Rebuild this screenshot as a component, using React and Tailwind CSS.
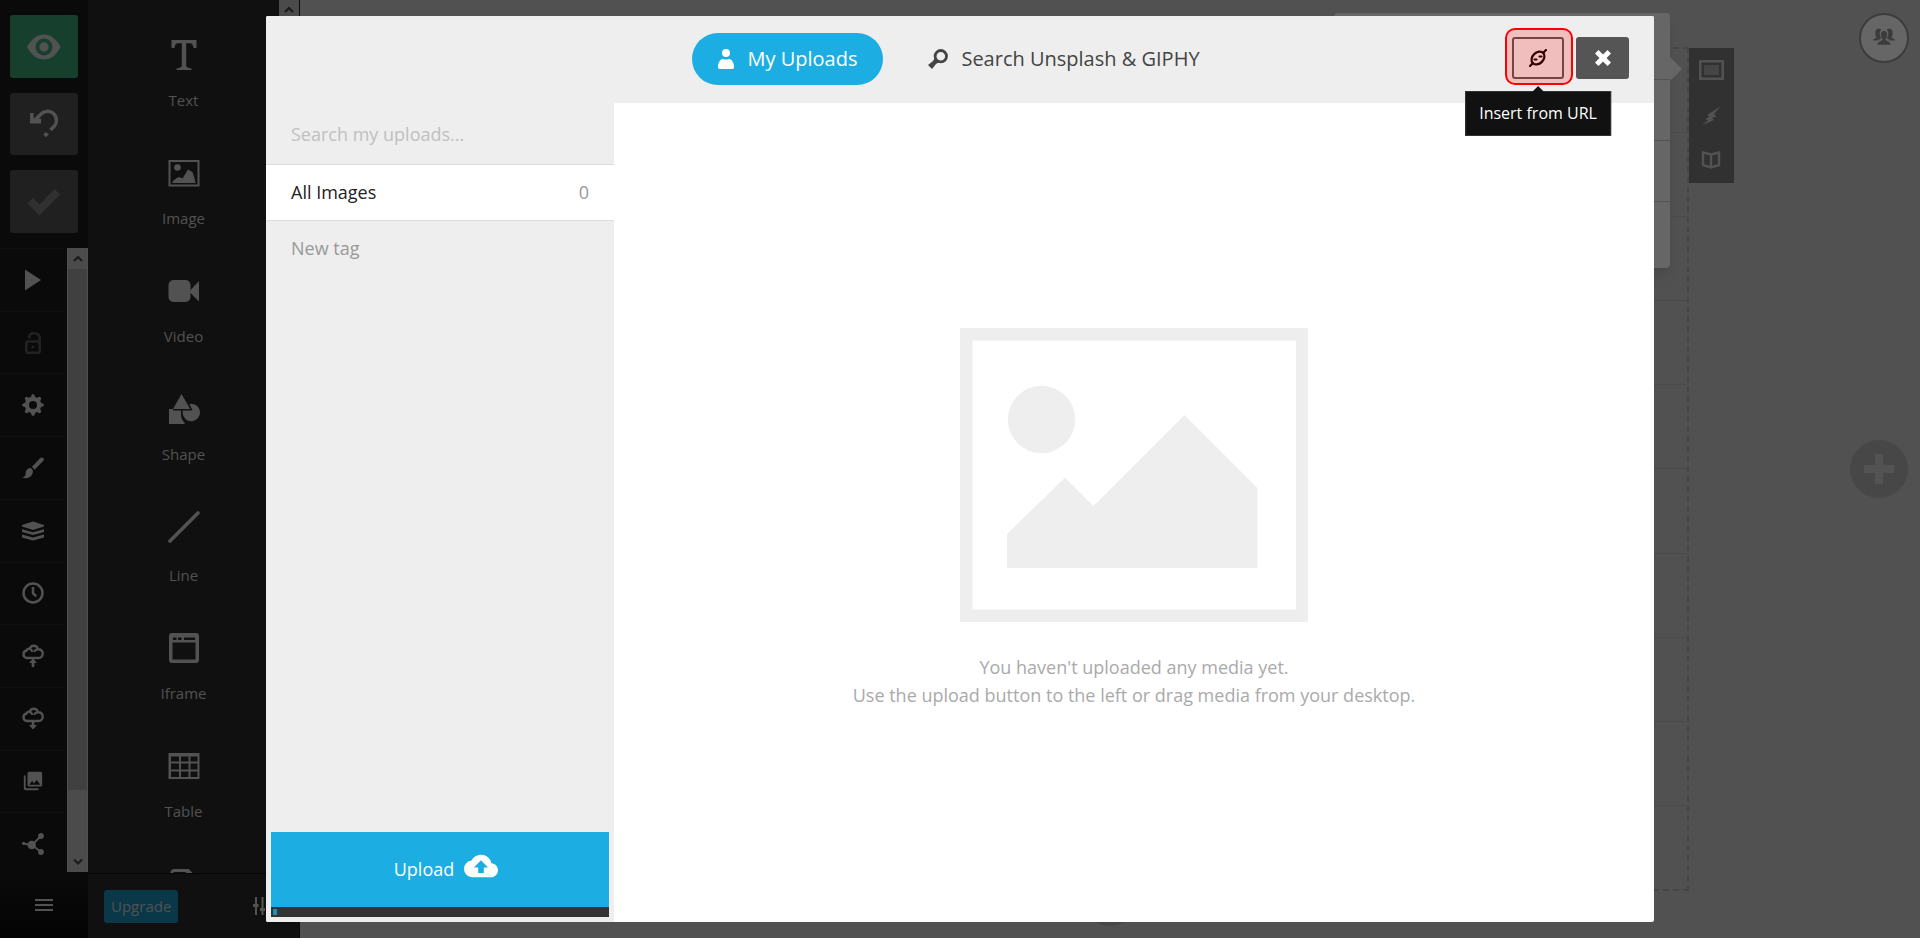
import React from "react";
import { MdBackup, MdCollections } from "react-icons/md";

function Svg({ className, box = "0 0 32 32", children }) {
  return (
    <svg viewBox={box} className={className} fill="currentColor" aria-hidden="true">
      {children}
    </svg>
  );
}

const EyeIcon = () => (
  <Svg box="0 0 34 26" className="w-[34px] h-[26px]">
    <path
      fillRule="evenodd"
      d="M0 13C4 6 9.500 0.500 17 0.500S30 6 33.500 13C30 20 24.500 25.500 17 25.500S4 20 0 13zM17 4.500a8.500 8.500 0 1 0 0 17a8.500 8.500 0 0 0 0-17zM17 8.300a4.700 4.700 0 1 1 0 9.400a4.700 4.700 0 0 1 0-9.400z"
    />
  </Svg>
);

const UndoIcon = () => (
  <Svg box="0 0 30 30" className="w-[30px] h-[30px]">
    <path
      d="M5 12L11 6C15 1.500 21 1.200 24.500 4.500C28.500 8.500 28 14 25.500 17L21.500 21"
      fill="none"
      stroke="currentColor"
      strokeWidth="3.400"
    />
    <path d="M1 4h3.600v5.500l4.500 0.200h3v4.800H1z" />
    <path d="M17 23l2.800 2.600l-2.800 2.600l-2.800-2.600z" />
  </Svg>
);

const CheckIcon = () => (
  <Svg box="0 0 34 28" className="w-[34px] h-[28px]">
    <path d="M0.500 15.500L6 10l6.500 6.500L27.500 1l5.500 5.500L12.500 27.500z" />
  </Svg>
);

const PlayIcon = () => (
  <Svg box="0 0 22 22" className="size-[22px]">
    <path d="M3 0.500L19 11L3 21.500z" />
  </Svg>
);

const LockIcon = () => (
  <Svg box="0 0 22 22" className="size-[22px] text-[#222222]">
    <path d="M7.300 6.500V5.500C7.500 3 9.300 1.300 12 1.300C15.500 1.300 17.700 3.200 17.700 6.500V11" fill="none" stroke="currentColor" strokeWidth="2.600" />
    <rect x="4.300" y="9.500" width="13.400" height="11.200" rx="2" fill="none" stroke="currentColor" strokeWidth="2.600" />
    <circle cx="11" cy="15" r="1.600" />
  </Svg>
);

const GearIcon = () => (
  <Svg box="0 0 22 22" className="size-[22px]">
    {[0, 45, 90, 135].map((a) => (
      <path key={a} d="M9 2.500L10 0.300h2L13 2.500v17L12 21.700h-2L9 19.500z" transform={`rotate(${a} 11 11)`} />
    ))}
    <circle cx="11" cy="11" r="8.300" />
    <circle cx="11" cy="11" r="4" className="fill-[#0a0a0a]" />
  </Svg>
);

const BrushIcon = () => (
  <Svg box="0 0 22 22" className="size-[22px]">
    <path d="M12.500 12.800L10 9.800L18 1.200C19 0.200 20.400 0.200 21.200 1C22 1.900 22 3 21.200 4z" />
    <path d="M0.500 20.500C2.800 20 3.500 18.500 3.700 16C4 13.200 5.600 11.200 7.800 11C9.800 11 11 12.500 10.900 14.500C10.800 19 6.500 22.300 0.500 20.800z" />
  </Svg>
);

const LayersIcon = () => (
  <Svg box="0 0 22 22" className="size-[22px]">
    <path d="M0 5L11 1.500L22 5v1.500L11 10L0 6.500z" />
    <path d="M0 9.300l11 3l11-3v2.600l-11 3l-11-3zM0 14.600l11 3l11-3v2.800l-11 3l-11-3z" />
  </Svg>
);

const ClockIcon = () => (
  <Svg box="0 0 22 22" className="size-[22px]">
    <circle cx="11" cy="11" r="9.500" fill="none" stroke="currentColor" strokeWidth="2.500" />
    <path d="M11 5v6.500l3.300 2.800" fill="none" stroke="currentColor" strokeWidth="2.500" />
  </Svg>
);

function CloudSync({ down }) {
  return (
    <Svg box="0 0 22 24" className="w-[22px] h-6">
      <path
        d="M8 14H5a3.800 3.800 0 0 1-.5-7.500C5 5 6.500 4.500 7.700 4.800C8.500 2.500 10 1.800 11.600 1.800C14 1.800 15.600 3.500 15.800 5.300C18.600 4.900 20.700 6.800 20.700 9.400C20.700 12 19 14 16.500 14H8"
        fill="none"
        stroke="currentColor"
        strokeWidth="2.400"
      />
      <path d="M7.700 5c1.600.3 2.400 1.500 2.400 3M15.600 5.500c-2 .2-3.200 1-3.500 2.500" fill="none" stroke="currentColor" strokeWidth="2" />
      {down ? <path d="M9.700 13h2.600v5H15l-4 4.500l-4-4.500h2.700z" /> : <path d="M9.700 23h2.600v-4H15l-4-4.500L7 19h2.700z" />}
    </Svg>
  );
}

const ShareIcon = () => (
  <Svg box="0 0 22 22" className="size-[22px]">
    <path d="M1 10.500l9 1.500L19 3M10 12l9 7" fill="none" stroke="currentColor" strokeWidth="1.800" />
    <circle cx="9.700" cy="12" r="4.200" />
    <circle cx="19" cy="3" r="2.900" />
    <circle cx="19" cy="19" r="2.900" />
    <circle cx="1.600" cy="10.300" r="1.600" />
  </Svg>
);

const TextIcon = () => (
  <Svg className="size-8">
    <path d="M3.500 1h25v8h-3c-.5-3.500-1.500-4.700-4-4.700h-3.300V26c0 2 .8 2.500 5.300 3.500V31h-15v-1.500C13 28.500 13.800 28 13.800 26V4.300h-3.300C8 4.300 7 5.500 6.500 9h-3z" />
  </Svg>
);

const ImageIcon = () => (
  <Svg className="size-8">
    <rect x="1.500" y="4" width="29" height="24.500" fill="none" stroke="currentColor" strokeWidth="2" />
    <circle cx="9.500" cy="10.500" r="3.300" />
    <path d="M4.500 26v-1.500L8.500 21l3-1l3 1.500L20 12.500l4.500 2.500L26.500 21l1 5z" />
  </Svg>
);

const VideoIcon = () => (
  <Svg className="size-8">
    <rect x="0.500" y="5" width="22" height="22" rx="5" />
    <path d="M22 15.500L31 6v20.500L22 17.500z" />
  </Svg>
);

const ShapeIcon = () => (
  <Svg className="size-8">
    <path d="M1 16h4v1.500h8V21c0 4 1.300 6.500 3.500 8.500V31H1z" />
    <path d="M13.500 1l8.700 15H5z" />
    <path d="M20 17.500h4.500L21.500 11A8.700 8.700 0 1 1 14.600 20v-2.500z" />
  </Svg>
);

const LineIcon = () => (
  <Svg className="size-8">
    <path d="M2 30L30 2" stroke="currentColor" strokeWidth="3.600" strokeLinecap="round" />
  </Svg>
);

const IframeIcon = () => (
  <Svg className="size-8">
    <path
      fillRule="evenodd"
      d="M4 1h24a3 3 0 0 1 3 3v24a3 3 0 0 1-3 3H4a3 3 0 0 1-3-3V4a3 3 0 0 1 3-3zM4.500 10.500v17h23v-17zM5 5.500v2.500h3.500V5.500zM10 5.500v2.500h3.500V5.500zM16 5.500v2.500h11V5.500z"
    />
  </Svg>
);

const TableIcon = () => (
  <Svg className="size-8">
    <path
      fillRule="evenodd"
      d="M0.500 3h31v26h-31zM3 6.500v5h8v-5zM13 6.500v5h7.500v-5zM22.500 6.500v5h7v-5zM3 13.500v6h8v-6zM13 13.500v6h7.500v-6zM22.500 13.500v6h7v-6zM3 21.500v5.500h8v-5.500zM13 21.500v5.500h7.500v-5.500zM22.500 21.500v5.500h7v-5.500z"
    />
  </Svg>
);

const FileIcon = () => (
  <Svg className="size-8">
    <path d="M4 31V4.500a2 2 0 0 1 2-2h14l6 6V31z" fill="none" stroke="currentColor" strokeWidth="3" />
    <path d="M19 3v7h7" fill="none" stroke="currentColor" strokeWidth="2.500" />
  </Svg>
);

const Chevron = ({ down }) => (
  <Svg box="0 0 10 8" className="w-[10px] h-2">
    <path
      d={down ? "M1 1.500L5 5.500L9 1.500" : "M1 6L5 2L9 6"}
      fill="none"
      className="stroke-[#1c1c1c]"
      strokeWidth="2.200"
    />
  </Svg>
);

const tools = [
  { name: "Play", icon: <PlayIcon /> },
  { name: "Unlock", icon: <LockIcon /> },
  { name: "Settings", icon: <GearIcon /> },
  { name: "Theme", icon: <BrushIcon /> },
  { name: "Layers", icon: <LayersIcon /> },
  { name: "History", icon: <ClockIcon /> },
  { name: "Export", icon: <CloudSync /> },
  { name: "Import", icon: <CloudSync down /> },
  { name: "Media", icon: <MdCollections className="size-[22px]" /> },
  { name: "Share", icon: <ShareIcon /> },
];

const elements = [
  { name: "Text", icon: <TextIcon /> },
  { name: "Image", icon: <ImageIcon /> },
  { name: "Video", icon: <VideoIcon /> },
  { name: "Shape", icon: <ShapeIcon /> },
  { name: "Line", icon: <LineIcon />, tall: true },
  { name: "Iframe", icon: <IframeIcon /> },
  { name: "Table", icon: <TableIcon /> },
];

function ToolRail() {
  return (
    <aside className="flex w-[88px] shrink-0 flex-col bg-[#0a0a0a] text-[#525252]">
      <div className="flex flex-col gap-[15px] px-[10px] py-[15px]">
        <button aria-label="Preview" className="flex h-[63px] items-center justify-center rounded-[3px] bg-[#16402d]">
          <EyeIcon />
        </button>
        <button aria-label="Undo" className="flex h-[62px] items-center justify-center rounded-[3px] bg-[#202020]">
          <UndoIcon />
        </button>
        <button aria-label="Save" className="flex h-[63px] items-center justify-center rounded-[3px] bg-[#202020] text-[#303030]">
          <CheckIcon />
        </button>
      </div>
      <div className="flex min-h-0 flex-1">
        <div className="flex-1 overflow-hidden">
          <div className="flex h-[627px] flex-col">
            {tools.map((t) => (
              <button
                key={t.name}
                aria-label={t.name}
                className="flex flex-1 items-center justify-center border-t border-[#0f0f0f] pr-0.5"
              >
                {t.icon}
              </button>
            ))}
          </div>
        </div>
        <div className="flex w-[21px] flex-col items-center border-x border-[#505050] bg-[#4b4b4b]">
          <div className="flex h-[21px] items-center">
            <Chevron />
          </div>
          <div className="w-full flex-1 bg-[#404040]" />
          <div className="flex h-[82px] items-end pb-[6px]">
            <Chevron down />
          </div>
        </div>
      </div>
      <button aria-label="Menu" className="flex h-[66px] items-center justify-center bg-gradient-to-b from-[#0a0a0a] to-[#040404]">
        <Svg box="0 0 18 12" className="h-3 w-[18px]">
          <path d="M0 0h18v2H0zM0 5h18v2H0zM0 10h18v2H0z" />
        </Svg>
      </button>
    </aside>
  );
}

function ElementPanel() {
  return (
    <aside className="flex w-[212px] shrink-0 flex-col border-r border-[#0a0a0a] bg-[#101010] text-[#525252]">
      <div className="flex min-h-0 flex-1">
        <div className="w-[192px] overflow-hidden pt-[39px]">
          {elements.map((e) => (
            <button key={e.name} className="flex w-full flex-col items-center pb-[47px] text-[15px] leading-5">
              {e.icon}
              <span className={e.tall ? "mt-[22px]" : "mt-[19px]"}>{e.name}</span>
            </button>
          ))}
          <button aria-label="File" className="flex w-full flex-col items-center">
            <FileIcon />
          </button>
        </div>
        <div className="flex-1 bg-[#4b4b4b] px-[5px] pt-[6px]">
          <Chevron />
        </div>
      </div>
      <div className="flex h-[65px] items-center justify-between border-t border-[#060606] pl-4 pr-[28px]">
        <button className="h-[33px] rounded-[3px] bg-[#0a3849] px-[7px] text-[15px] leading-[33px]">Upgrade</button>
        <button aria-label="Options">
          <Svg box="0 0 18 18" className="size-[18px]">
            <path d="M2 0h2v7h1.500v3H4v8H2v-8H0V7h2zM8.500 0h2v11h1.500v3h-1.500v4h-2v-4H7v-3h1.500zM15 0h2v4h1v3h-1v11h-2V7h-1.500V4H15z" />
          </Svg>
        </button>
      </div>
    </aside>
  );
}

function Canvas() {
  return (
    <main className="relative flex-1 overflow-hidden bg-[#515151]">
      <div className="absolute right-[231px] top-[47px] flex h-[844px] w-[1157px] flex-col border-2 border-dashed border-[#464646]">
        {Array.from({ length: 10 }, (_, i) => (
          <div key={i} className={i ? "flex-1 border-t border-[#4a4a4a]" : "flex-1"} />
        ))}
      </div>
      <div className="absolute right-[250px] top-[13px] flex h-[255px] w-[336px] flex-col rounded bg-[#666666] shadow-lg">
        <div className="h-[66px]" />
        <div className="h-[61px] border-t border-[#535353]" />
        <div className="h-[61px] border-t border-[#535353]" />
        <div className="flex-1 border-t border-[#535353]" />
        <svg viewBox="0 0 12 24" className="absolute left-full top-11 h-6 w-3 fill-[#666666]" aria-hidden="true">
          <path d="M0 0l12 12L0 24z" />
        </svg>
      </div>
      <div className="absolute right-[186px] top-12 flex h-[135px] w-[45px] flex-col items-center justify-between bg-[#313131] pb-3 pr-px pt-3 text-[#525252]">
        <button aria-label="Slide">
          <Svg box="0 0 25 20" className="h-5 w-[25px]">
            <path fillRule="evenodd" d="M0 0h25v20H0zM2.500 2.500v15h20v-15z" />
            <rect x="5" y="5" width="15" height="10" className="fill-[#454545]" />
          </Svg>
        </button>
        <button aria-label="Interactivity">
          <Svg box="0 0 20 20" className="size-5">
            <path d="M19.500 0.500L6 9l2.500 1.500L4.500 13l2.500 1.500L0.500 19.500L13 14l-2-2l4.500-1.500L13 8z" />
          </Svg>
        </button>
        <button aria-label="Notes" className="pb-0.5">
          <Svg box="0 0 20 18" className="h-[18px] w-5">
            <path d="M10 4v13M10 3.500L2 1.500v12.500l8 2.500l8-2.500V1.500z" fill="none" stroke="currentColor" strokeWidth="2.400" />
          </Svg>
        </button>
      </div>
      <button
        aria-label="Collaborators"
        className="absolute right-[11px] top-[13px] flex size-[50px] items-center justify-center rounded-full border-2 border-[#3c3c3c] bg-[#666666] pb-0.5 text-[#3c3c3c]"
      >
        <Svg box="0 0 22 18" className="h-[18px] w-[22px]">
          <path d="M5.500 0.500C7.500.5 8 1.500 8 2C6.300 3.500 6.400 7 7.500 9L8 10.500C7 11 5.800 11.500 5.300 12.500H0C.2 10.500 2.500 10.500 3.500 9.500C1.800 7.500 1.500 0.500 5.500.5zM16.500 0.500C14.500.5 14 1.500 14 2C15.700 3.500 15.600 7 14.500 9L14 10.500C15 11 16.200 11.500 16.700 12.500H22C21.800 10.500 19.500 10.500 18.500 9.500C20.200 7.500 20.500 0.500 16.500.5z" />
          <path d="M11 3C14 3 14.500 5.500 14 8C13.700 9.700 13 10.500 12.600 11.200C12.800 13.200 17.500 13 17.500 16.800H4.500C4.500 13 9.200 13.200 9.400 11.200C9 10.500 8.300 9.700 8 8C7.500 5.500 8 3 11 3z" />
        </Svg>
      </button>
      <button
        aria-label="Add slide to the right"
        className="absolute right-3 top-1/2 flex size-[58px] -translate-y-1/2 items-center justify-center rounded-full bg-[#474747] text-[#535353]"
      >
        <Svg box="0 0 30 30" className="size-[30px]">
          <path d="M11 0h8v11h11v8H19v11h-8V19H0v-8h11z" />
        </Svg>
      </button>
      <button
        aria-label="Add slide below"
        className="absolute bottom-3 left-[781px] size-[58px] rounded-full bg-[#474747]"
      />
    </main>
  );
}

function ModalHeader() {
  return (
    <header className="flex h-[87px] shrink-0 items-start rounded-t-[2px] bg-[#eeeeee] px-[25px] pt-[17px]">
      <div className="flex-1" />
      <nav className="flex items-center gap-[17px] text-[20px]">
        <button className="flex h-[52px] items-center gap-[13px] rounded-full bg-[#1caee3] px-[26px] text-white">
          <Svg box="0 0 16 20" className="h-5 w-4">
            <circle cx="8" cy="4" r="4" />
            <path d="M0 18c0-4.500 2.500-8 5-8c1.500.7 4.500.7 6 0c2.500 0 5 3.500 5 8c0 1.200-.5 2-1.500 2h-13C.5 20 0 19.200 0 18z" />
          </Svg>
          My Uploads
        </button>
        <button className="flex h-[52px] items-center gap-[13px] px-[28px] text-[#444444]">
          <Svg box="0 0 20 20" className="size-5">
            <circle cx="12.800" cy="7.200" r="5.700" fill="none" stroke="currentColor" strokeWidth="2.800" />
            <path d="M6.500 9.500l4 4l-2.500 1.500l-4 5l-4-4l5-4z" />
          </Svg>
          Search Unsplash &amp; GIPHY
        </button>
      </nav>
      <div className="flex flex-1 items-center justify-end gap-3 pt-1">
        <div className="relative">
          <button
            aria-label="Insert from URL"
            aria-describedby="url-tip"
            className="flex h-[42px] w-[52px] items-center justify-center rounded-[3px] border-2 border-[#555555] text-black"
          >
            <Svg box="0 0 18 18" className="size-[18px]">
              <g fill="none" stroke="currentColor" strokeWidth="2.200" strokeLinecap="round">
                <ellipse cx="9" cy="9" rx="7.300" ry="5.500" transform="rotate(-45 9 9)" />
                <path d="M1 17l3-3M14 4l3-3M5.500 10.500l2 0M10.500 7.500l2 0" />
              </g>
            </Svg>
          </button>
          <div className="pointer-events-none absolute -bottom-[6px] -left-[7px] -right-[9px] -top-[9px] rounded-[10px] border-2 border-[#ff0000] bg-[#ff0000]/20" />
          <div
            id="url-tip"
            role="tooltip"
            className="absolute left-1/2 top-[54px] -translate-x-1/2 whitespace-nowrap border border-[#333333] bg-[#111111] px-[13px] text-[16px] leading-[43px] text-white"
          >
            <svg viewBox="0 0 12 6" className="absolute bottom-full left-1/2 h-[6px] w-3 -translate-x-1/2 fill-[#111111]" aria-hidden="true">
              <path d="M6 0l6 6H0z" />
            </svg>
            Insert from URL
          </div>
        </div>
        <button aria-label="Close" className="flex h-[42px] w-[53px] items-center justify-center rounded-[3px] bg-[#555555] text-white">
          <Svg box="0 0 16 16" className="size-4">
            <path d="M3.500 0L8 4.500L12.500 0L16 3.500L11.500 8L16 12.500L12.500 16L8 11.500L3.500 16L0 12.500L4.500 8L0 3.500z" />
          </Svg>
        </button>
      </div>
    </header>
  );
}

function MediaModal() {
  return (
    <div role="dialog" aria-label="Media library" className="flex flex-1 flex-col rounded-[2px] bg-white">
      <ModalHeader />
      <div className="flex min-h-0 flex-1">
        <aside className="flex w-[348px] shrink-0 flex-col rounded-bl-[2px] bg-[#eeeeee] text-[18px]">
          <input
            type="text"
            aria-label="Search my uploads"
            placeholder="Search my uploads..."
            className="h-[61px] w-full bg-transparent px-[25px] text-[#444444] outline-none placeholder:text-[#c0c0c0]"
          />
          <button className="flex h-[57px] items-center justify-between border-y border-[#dddddd] bg-white px-[25px] text-[#222222]">
            All Images
            <span className="text-[#999999]">0</span>
          </button>
          <button className="h-[54px] px-[25px] text-left text-[#999999]">New tag</button>
          <div className="mt-auto p-[5px]">
            <button className="flex h-[75px] w-full items-center justify-center gap-[10px] bg-[#1caee3] pl-3 text-white">
              Upload
              <MdBackup className="mb-2 size-[34px]" />
            </button>
            <div className="h-[10px] bg-[#333333] p-0.5">
              <div className="h-[6px] w-1 bg-[#1a8ebc]" />
            </div>
          </div>
        </aside>
        <section className="flex flex-1 flex-col items-center justify-center gap-[31px] pt-3">
          <svg viewBox="0 0 348 294" className="h-[294px] w-[348px] fill-[#eeeeee]" aria-hidden="true">
            <path fillRule="evenodd" d="M0 0h348v294H0zM12.500 12.500v269h323.500v-269z" />
            <circle cx="81.500" cy="91.500" r="33.700" />
            <path d="M47 206L105 149.500L133.500 178L224.500 87L297.500 160v80H47z" />
          </svg>
          <p className="text-center text-[18px] leading-7 text-[#aaaaaa]">
            You haven't uploaded any media yet.
            <br />
            Use the upload button to the left or drag media from your desktop.
          </p>
        </section>
      </div>
    </div>
  );
}

export default function App() {
  return (
    <div className="relative flex h-screen w-full overflow-hidden font-['Open_Sans',sans-serif]">
      <ToolRail />
      <ElementPanel />
      <Canvas />
      <div className="absolute inset-0 flex px-[266px] py-4">
        <MediaModal />
      </div>
    </div>
  );
}
